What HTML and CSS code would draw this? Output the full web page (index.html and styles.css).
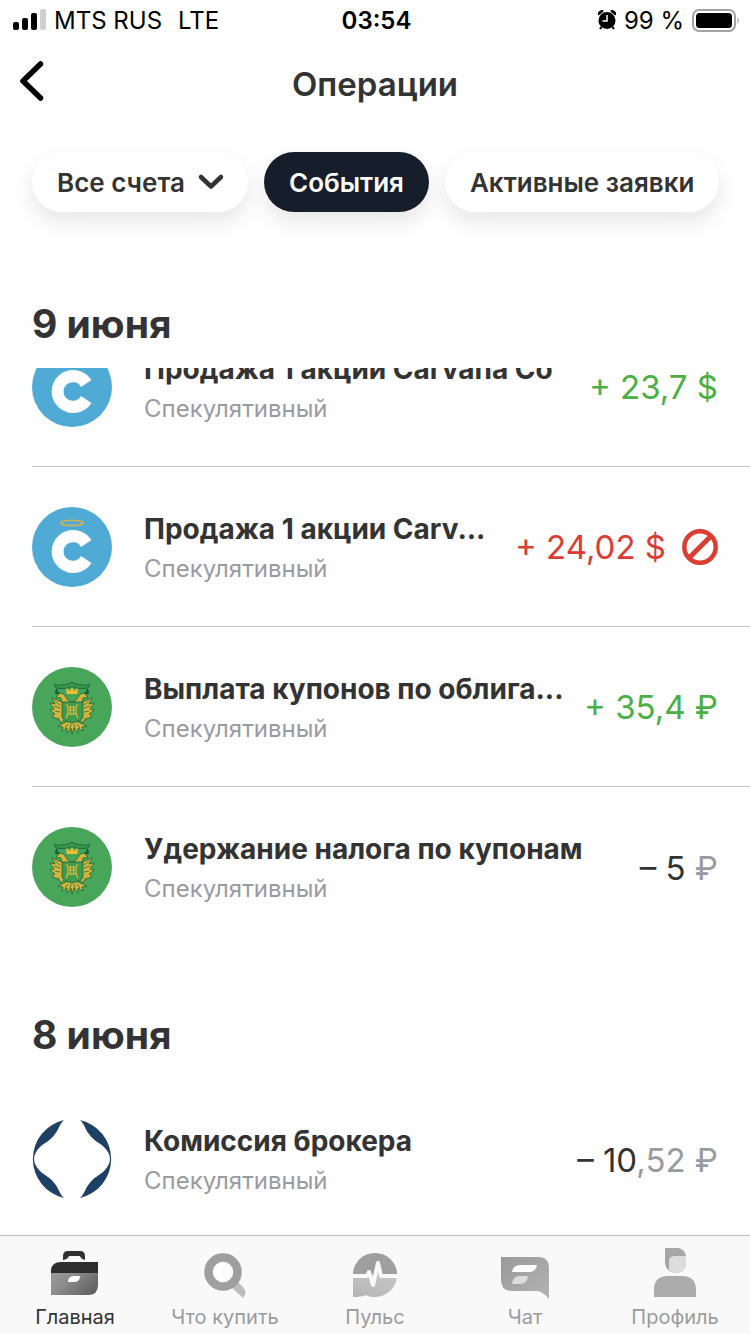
FILE: index.html
```html
<!DOCTYPE html>
<html lang="ru">
<head>
<meta charset="utf-8">
<meta name="viewport" content="width=device-width, initial-scale=1">
<title>Операции</title>
<link rel="stylesheet" href="styles.css">
</head>
<body>
<svg class="sprite" aria-hidden="true">
  <defs>
    <linearGradient id="case-fill" x1="0" y1="0.3" x2="1" y2="0.8"><stop offset="0" stop-color="#989898"/><stop offset="0.35" stop-color="#8a8a8a"/><stop offset="1" stop-color="#5c5c5c"/></linearGradient>
    <linearGradient id="chat-fill" x1="0" y1="0" x2="1" y2="1"><stop offset="0" stop-color="#999"/><stop offset="1" stop-color="#b4b4b4"/></linearGradient>
    <linearGradient id="pulse-fill" x1="0" y1="1" x2="1" y2="0"><stop offset="0" stop-color="#b5b5b5"/><stop offset="1" stop-color="#c8c8c8"/></linearGradient>
  </defs>
  <symbol id="carvana" viewBox="0 0 80 80">
    <circle cx="40" cy="40" r="40" fill="#4fabd5"/>
    <ellipse cx="40" cy="16" rx="11.5" ry="2.7" fill="none" stroke="#c3b25f" stroke-width="1.8"/>
    <path d="M59.5 33 L49 40 A9.300 9.300 0 1 0 49 49 L59.500 56 A21.600 21.600 0 1 1 59.500 33 Z" fill="#fff"/>
  </symbol>
  <symbol id="emblem" viewBox="0 0 80 80">
    <circle cx="40" cy="40" r="40" fill="#47a65a"/>
    <g stroke="#165c34" stroke-width="0.7" stroke-linejoin="round">
      <path d="M22 17 Q31 20 40 15 Q49 20 58 17 L56 21 Q48 23 40 20 Q32 23 24 21 Z" fill="#389350"/>
      <path d="M25 22 L24 26 L30 27 M55 22 L56 26 L50 27" fill="none" stroke-width="2"/>
      <path d="M39 35 C33 33 34 26 28 26 L24 30 L29 31 L30 35 L20 31 L23 37 L18 36 L22 42 L18 43 L23 47 L20 50 L27 52 L29 56 L33 52 H47 L51 56 L53 52 L60 50 L57 47 L62 43 L58 42 L62 36 L57 37 L60 31 L50 35 L51 31 L56 30 L52 26 C46 26 47 33 41 35 Z" fill="#d6b43d"/>
      <path d="M36 54 L26 59 L31 60 L30 64 L35 61 L35 66 L39 61 L40 67 L42 61 L46 66 L46 61 L51 64 L50 60 L55 59 L44 54 Z" fill="#d6b43d"/>
      <path d="M30 35 H51 V50 Q50 54 40 56 Q31 54 30 50 Z" fill="#419b4d"/>
    </g>
    <path d="M35 27 L34 21 L38 24 L40 20 L42 24 L46 21 L45 27 Z" fill="#f0bd35"/>
    <g stroke="#d8b93d" stroke-width="1.2" fill="none">
      <path d="M34 37 L36 40 V47 L34 51 M46 37 L44 40 V47 L46 51 M36 40 H44 M36 43 H44 M35 47 H45 M38.500 39 V48 M41.500 39 V48"/>
    </g>
    <path d="M36 57 L33 61 M39 57 L38 62 M42 57 L43 62 M45 57 L48 61 M23 34 L28 38 M22 39 L28 41 M23 44 L28 45 M57 34 L52 38 M58 39 L52 41 M57 44 L52 45" stroke="#287343" stroke-width="0.8"/>
  </symbol>
</svg>

<div class="app">
  <div class="status">
    <div class="status-left">
      <svg width="33" height="22" viewBox="0 0 33 22" aria-hidden="true">
        <rect x="0" y="13" width="6" height="8" rx="2"/><rect x="9" y="9" width="6" height="12" rx="2"/><rect x="18" y="4" width="6" height="17" rx="2"/><rect x="27" y="0" width="6" height="21" rx="2" fill="#cfcfcf"/>
      </svg>
      <span>MTS RUS</span><span class="network">LTE</span>
    </div>
    <time class="clock">03:54</time>
    <div class="status-right">
      <svg width="18" height="20" viewBox="0 0 18 20" aria-hidden="true">
        <circle cx="9" cy="10.500" r="8.500"/><path d="M0.500 5 Q-0.500 0.500 5 0.500 L5 1.500 Z M17.500 5 Q18.500 0.500 13 0.500 L13 1.500 Z" stroke="#000" stroke-width="1"/><path d="M3.500 17 L2 19 M14.500 17 L16 19" fill="none" stroke="#000" stroke-width="2"/><path d="M9 5 V11 H4.500" fill="none" stroke="#fff" stroke-width="1.500"/>
      </svg>
      <span>99 %</span>
      <svg width="48" height="23" viewBox="0 0 48 23" aria-hidden="true">
        <rect x="1" y="1" width="42" height="21" rx="6" fill="none" stroke="#a3a3a3" stroke-width="2"/><rect x="4" y="4" width="36" height="15" rx="3.500"/><path d="M45.500 8 Q48 11.500 45.500 15 Z" fill="#999"/>
      </svg>
    </div>
  </div>

  <header class="header">
    <button class="back" type="button" aria-label="Назад">
      <svg width="24" height="40" viewBox="0 0 24 40"><path d="M20.500 3 L3 20 L20.500 37" fill="none" stroke="#000" stroke-width="5.500" stroke-linecap="round" stroke-linejoin="round"/></svg>
    </button>
    <h1 class="title">Операции</h1>
  </header>

  <div class="filters">
    <button class="pill" type="button" aria-haspopup="listbox">Все счета
      <svg width="24" height="14" viewBox="0 0 24 14" aria-hidden="true"><path d="M2 2 L12 11.500 L22 2" fill="none" stroke="#333" stroke-width="4.500" stroke-linecap="round" stroke-linejoin="round"/></svg>
    </button>
    <button class="pill pill-active" type="button" aria-pressed="true">События</button>
    <button class="pill" type="button" aria-pressed="false">Активные заявки</button>
  </div>

  <main class="feed">
    <section class="day">
      <h2 class="date">9 июня</h2>
      <ul class="list">
        <li class="row row-scrolled">
          <svg class="avatar" aria-hidden="true"><use href="#carvana"/></svg>
          <div class="info"><h3 class="name">Продажа 1 акции Carvana Co</h3><p class="account">Спекулятивный</p></div>
          <span class="amount gain">+ 23,7 $</span>
        </li>
        <li class="row">
          <svg class="avatar" aria-hidden="true"><use href="#carvana"/></svg>
          <div class="info"><h3 class="name">Продажа 1 акции Carv...</h3><p class="account">Спекулятивный</p></div>
          <span class="amount rejected">+ 24,02 $
            <svg width="36" height="36" viewBox="0 0 36 36" aria-label="Отклонено"><circle cx="18" cy="18" r="15.700" fill="none" stroke="#dc3d33" stroke-width="4.500"/><path d="M7.500 28.500 L28.500 7.500" stroke="#dc3d33" stroke-width="5"/></svg>
          </span>
        </li>
        <li class="row">
          <svg class="avatar" aria-hidden="true"><use href="#emblem"/></svg>
          <div class="info"><h3 class="name">Выплата купонов по облига...</h3><p class="account">Спекулятивный</p></div>
          <span class="amount gain">+ 35,4 ₽</span>
        </li>
        <li class="row">
          <svg class="avatar" aria-hidden="true"><use href="#emblem"/></svg>
          <div class="info"><h3 class="name">Удержание налога по купонам</h3><p class="account">Спекулятивный</p></div>
          <span class="amount"><span>– 5 <span class="minor">₽</span></span></span>
        </li>
      </ul>
    </section>
    <section class="day">
      <h2 class="date">8 июня</h2>
      <ul class="list">
        <li class="row">
          <svg class="avatar" viewBox="0 0 80 80" fill="#1f4065" aria-hidden="true">
            <path id="leaf" d="M32 1 A40 40 0 0 0 32 79 C27 74 27 70 23 65 C18 58 12 56 8 52 C4 48 2 44 2 40 C2 36 4 32 8 28 C12 24 18 22 23 15 C27 10 27 6 32 1 Z"/>
            <use href="#leaf" transform="matrix(-1 0 0 1 80 0)"/>
          </svg>
          <div class="info"><h3 class="name">Комиссия брокера</h3><p class="account">Спекулятивный</p></div>
          <span class="amount"><span>– 10<span class="minor">,52 ₽</span></span></span>
        </li>
      </ul>
    </section>
  </main>

  <nav class="tabs">
    <a class="tab tab-active" href="#home" aria-current="page">
      <svg class="tab-icon" viewBox="0 0 50 50"><path d="M13 12 V8 Q13 3 18 3 H30 Q35 3 35 8 V12 Q31 11 30 8 H19 Q18 11 13 12 Z" fill="#303030"/><path d="M1 25 V22 Q2 14 11 14 H48 V25 Z" fill="#2e2e2e"/><path d="M1 25 H48 V37 Q48 47 38 47 H1 Z" fill="url(#case-fill)"/><path d="M18 34 Q18 28 24 28 H30 Q30 34 24 34 Z" fill="#fff"/></svg>
      Главная</a>
    <a class="tab" href="#buy">
      <svg class="tab-icon" viewBox="0 0 50 50"><path d="M30 38 L36 32 L43 39 Q48 45 43 50 Z" fill="#bdbdbd"/><circle cx="23" cy="24" r="14.500" fill="#fff" stroke="#9f9f9f" stroke-width="8.500"/></svg>
      Что купить</a>
    <a class="tab" href="#pulse">
      <svg class="tab-icon" viewBox="0 0 50 50"><path d="M3 26 A22 21 0 0 1 47 26 Z" fill="#9f9f9f"/><path d="M3 26 H47 A22 22 0 0 1 25 49 Q19 49 16 47 Q12 49 3 49 Z" fill="url(#pulse-fill)"/><path d="M2 28 H17 L19 24 L23 37 L28 15 L31 28 H48" fill="none" stroke="#f9f9f9" stroke-width="4" stroke-linejoin="round"/></svg>
      Пульс</a>
    <a class="tab" href="#chat">
      <svg class="tab-icon" viewBox="0 0 50 50"><path d="M1 9 H38 Q49 9 49 20 V51 Q42 43 37 43 H12 Q1 43 1 32 Z" fill="url(#chat-fill)"/><path d="M12 24 Q13 17 20 17 H37 Q36 24 29 24 Z" fill="#fff"/><path d="M12 36 Q13 28 20 28 H28 Q27 36 20 36 Z" fill="#ddd"/></svg>
      Чат</a>
    <a class="tab" href="#profile">
      <svg class="tab-icon" viewBox="0 0 50 50"><path d="M4 49 V42 Q4 28 18 28 H32 Q46 28 46 42 V49 Z" fill="#acacac"/><path d="M15 0 H28 Q36 1 36 10 V14 Q36 25 25 25 Q15 24 15 14 Z" fill="#cdcdcd"/><path d="M15 0 H28 Q34 1 36 8 H24 Q19 8 19 14 V22 Q15 19 15 14 Z" fill="#a6a6a6"/><path d="M19 21 V14 Q19 8 25 8 H36 V14 Q36 25 25 25 Q21 24 19 21 Z" fill="#dcdcdc"/></svg>
      Профиль</a>
  </nav>
</div>
</body>
</html>
```

FILE: styles.css
```css
* { box-sizing: border-box; }
body { margin: 0; background: #fefefe; color: #333; font-family: Inter, "Noto Sans", sans-serif; }
h1, h2, h3, p, ul { margin: 0; padding: 0; }
button { border: 0; background: none; padding: 0; font: inherit; color: inherit; }
svg { display: block; flex: none; overflow: visible; }
.sprite { position: absolute; width: 0; height: 0; }

.app { display: flex; flex-direction: column; height: 100vh; overflow: hidden; }

.status { display: grid; grid-template-columns: 1fr auto 1fr; align-items: center; height: 40px; padding: 0 10px 0 13px; color: #000; font-size: 24px; line-height: 38px; }
.status span, .clock { padding-top: 2px; }
.status-left, .status-right { display: flex; align-items: center; gap: 8px; }
.status-right { justify-content: flex-end; }
.network { margin-left: 8px; }
.clock { font-weight: 600; }

.header { display: grid; grid-template-columns: 1fr auto 1fr; align-items: center; height: 88px; padding: 0 20px; }
.back { justify-self: start; padding-bottom: 6px; }
.title { font-size: 33px; line-height: 40px; font-weight: 600; }

.filters { display: flex; gap: 16px; padding: 24px 24px 68px 32px; }
.pill { display: flex; align-items: center; gap: 14px; height: 60px; padding: 0 25px; border-radius: 30px; background: #fff; font-size: 26px; font-weight: 600; white-space: nowrap; box-shadow: 0 10px 20px rgba(0, 0, 0, 0.09); }
.pill-active { background: #161d2b; color: #fff; }

.feed { flex: 1; min-height: 0; overflow: hidden; }
.day + .day { margin-top: 44px; }
.date { padding: 0 32px; font-size: 39px; line-height: 88px; font-weight: 700; }
.list { list-style: none; overflow: hidden; }
.row { display: flex; align-items: center; gap: 32px; height: 160px; margin-left: 32px; padding-right: 32px; }
.row:not(:last-child) { border-bottom: 1px solid #c8c8cb; }
.row-scrolled { margin-top: -61px; }
.avatar { width: 80px; height: 80px; }
.info { flex: 1; min-width: 0; padding-top: 4px; }
.name { font-size: 28px; line-height: 40px; font-weight: 700; white-space: nowrap; }
.account { font-size: 24px; line-height: 40px; color: #999ba0; }
.amount { display: flex; align-items: center; gap: 16px; padding-top: 1px; font-size: 33px; line-height: 38px; white-space: nowrap; }
.gain { color: #4caf45; }
.rejected { color: #dc3d33; }
.minor { color: #999ba0; }

.tabs { display: grid; grid-template-columns: repeat(5, 1fr); height: 99px; border-top: 1px solid #bdbdbf; background: #f9f9f9; }
.tab { display: flex; flex-direction: column; align-items: center; gap: 7px; padding-top: 12px; color: #999ba0; font-size: 20px; line-height: 24px; text-decoration: none; }
.tab-active { color: #333; }
.tab-icon { width: 50px; height: 50px; }
```
